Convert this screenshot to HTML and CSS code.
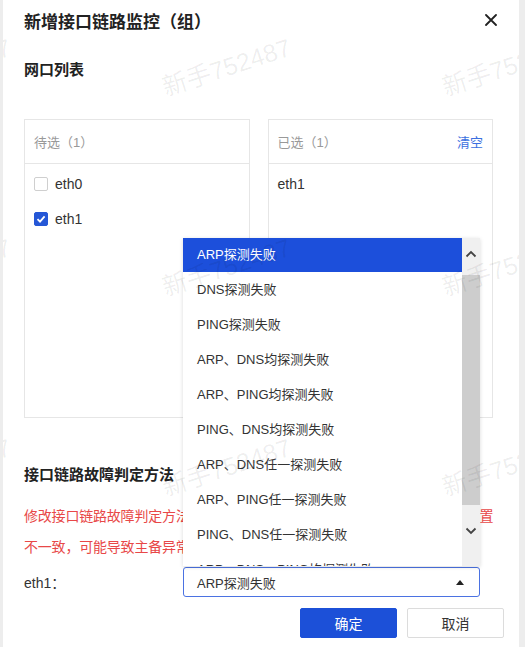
FILE: index.html
```html
<!DOCTYPE html>
<html lang="zh-CN">
  <head>
    <meta charset="UTF-8" />
    <meta name="viewport" content="width=device-width, initial-scale=1.0" />
    <title>新增接口链路监控（组）</title>
    <link rel="stylesheet" href="styles.css">
  </head>

  <body>
    <div class="dialog">
      <div class="dialog-header">
        <h2 class="dialog-title">新增接口链路监控（组）</h2>
        <button class="close-btn" aria-label="关闭">
          <svg width="12" height="12" viewBox="0 0 12 12">
            <path d="M1 1 L11 11 M11 1 L1 11" stroke="#222" stroke-width="1.8" stroke-linecap="round" />
          </svg>
        </button>
      </div>

      <h3 class="section-title">网口列表</h3>

      <div class="transfer">
        <div class="panel">
          <div class="panel-head">
            <span>待选（1）</span>
          </div>
          <ul class="panel-list">
            <li>
              <span class="checkbox"></span>
              eth0
            </li>
            <li>
              <span class="checkbox checked">
                <svg width="10" height="10" viewBox="0 0 10 10">
                  <path d="M1.5 5.2 L4 7.6 L8.6 2.4" fill="none" stroke="#fff" stroke-width="1.8" />
                </svg>
              </span>
              eth1
            </li>
          </ul>
        </div>
        <div class="panel">
          <div class="panel-head">
            <span>已选（1）</span>
            <a class="link">清空</a>
          </div>
          <ul class="panel-list">
            <li>eth1</li>
          </ul>
        </div>
      </div>

      <h3 class="section-title method-title">接口链路故障判定方法</h3>
      <p class="warning">
        <span>修改接口链路故障判定方法后，需确保主备设备接口的链路故障判定方法配置</span>
        <span>不一致，可能导致主备异常切换，请谨慎操作。</span>
      </p>

      <div class="form-row">
        <label class="form-label">eth1：</label>
        <div class="select">
          <span>ARP探测失败</span>
          <svg width="8" height="5" viewBox="0 0 8 5">
            <path d="M0 5 L4 0 L8 5 Z" fill="#222" />
          </svg>
        </div>
      </div>

      <div class="dialog-footer">
        <button class="btn btn-primary">确定</button>
        <button class="btn">取消</button>
      </div>

      <!-- open select list -->
      <div class="dropdown">
        <ul class="dropdown-list">
          <li class="active">ARP探测失败</li>
          <li>DNS探测失败</li>
          <li>PING探测失败</li>
          <li>ARP、DNS均探测失败</li>
          <li>ARP、PING均探测失败</li>
          <li>PING、DNS均探测失败</li>
          <li>ARP、DNS任一探测失败</li>
          <li>ARP、PING任一探测失败</li>
          <li>PING、DNS任一探测失败</li>
          <li>ARP、DNS、PING均探测失败</li>
        </ul>
        <div class="scrollbar">
          <div class="scroll-btn up">
            <svg width="12" height="8" viewBox="0 0 12 8">
              <path d="M1.5 6.5 L6 2 L10.5 6.5" fill="none" stroke="#444" stroke-width="1.8" />
            </svg>
          </div>
          <div class="scroll-thumb"></div>
          <div class="scroll-btn down">
            <svg width="12" height="8" viewBox="0 0 12 8">
              <path d="M1.5 1.5 L6 6 L10.5 1.5" fill="none" stroke="#444" stroke-width="1.8" />
            </svg>
          </div>
        </div>
      </div>

      <div class="watermark">
        <span style="left: -116px; top: 74px">新手752487</span>
        <span style="left: 164px; top: 74px">新手752487</span>
        <span style="left: 444px; top: 74px">新手752487</span>
        <span style="left: -116px; top: 274px">新手752487</span>
        <span style="left: 164px; top: 274px">新手752487</span>
        <span style="left: 444px; top: 274px">新手752487</span>
        <span style="left: -116px; top: 474px">新手752487</span>
        <span style="left: 164px; top: 474px">新手752487</span>
        <span style="left: 444px; top: 474px">新手752487</span>
      </div>
    </div>
  </body>
</html>
```

FILE: styles.css
```css
body {
  margin: 0;
  background-color: #ededed;
  font-family: "Liberation Sans", "Noto Sans CJK SC", sans-serif;
  font-size: 13px;
  color: #333;
}

ul {
  list-style: none;
  margin: 0;
  padding: 0;
}

.dialog {
  position: relative;
  box-sizing: border-box;
  width: 516px;
  height: 647px;
  margin-left: 3px;
  padding: 0 26px 0 21px;
  background-color: #fff;
  overflow: hidden;
}

.dialog-header {
  display: flex;
  align-items: center;
  justify-content: space-between;
  height: 40px;
}

.dialog-title {
  margin: 0;
  font-size: 17px;
  font-weight: 700;
  color: #222;
}

.close-btn {
  display: flex;
  border: none;
  background: none;
  padding: 0;
  margin-right: -4px;
  cursor: pointer;
}

.section-title {
  margin: 20px 0 0;
  font-size: 15px;
  line-height: 20px;
  font-weight: 700;
  color: #222;
}

.transfer {
  display: grid;
  grid-template-columns: 1fr 1fr;
  gap: 18px;
  margin-top: 39px;
}

.panel {
  height: 299px;
  box-sizing: border-box;
  border: 1px solid #e6e6e6;
}

.panel-head {
  display: flex;
  align-items: center;
  justify-content: space-between;
  height: 43px;
  padding: 0 9px;
  border-bottom: 1px solid #e6e6e6;
  color: #999;
}

.link {
  color: #3b6fe0;
  cursor: pointer;
}

.panel-list {
  padding: 2px 9px 0;
}

.panel-list li {
  display: flex;
  align-items: center;
  gap: 7px;
  height: 35px;
  font-size: 14px;
  color: #333;
}

.checkbox {
  display: flex;
  align-items: center;
  justify-content: center;
  width: 14px;
  height: 14px;
  box-sizing: border-box;
  border: 1px solid #cfcfcf;
  border-radius: 2px;
}

.checkbox.checked {
  border-color: #2557d6;
  background-color: #2557d6;
}

.method-title {
  margin-top: 46px;
  line-height: 22px;
}

.warning {
  margin: 15px 0 0;
  font-size: 14px;
  letter-spacing: -0.2px;
  line-height: 31px;
  color: #e84848;
}

.warning span {
  display: block;
  white-space: nowrap;
}

.form-row {
  display: flex;
  align-items: center;
  margin-top: 4px;
}

.form-label {
  width: 159px;
  font-size: 14px;
  color: #333;
}

.select {
  display: flex;
  align-items: center;
  justify-content: space-between;
  box-sizing: border-box;
  width: 297px;
  height: 30px;
  padding: 0 15px 0 13px;
  border: 1.5px solid #4b72e2;
  border-radius: 3px;
  color: #333;
}

.dialog-footer {
  display: flex;
  justify-content: flex-end;
  gap: 10px;
  margin: 11px -11px 0 0;
}

.btn {
  width: 97px;
  height: 30px;
  border: 1px solid #dcdcdc;
  border-radius: 2px;
  background-color: #fff;
  color: #333;
  font-family: inherit;
  font-size: 14px;
  cursor: pointer;
}

.btn-primary {
  border-color: #1c50d8;
  background-color: #1c50d8;
  color: #fff;
}

/* open select list */
.dropdown {
  position: absolute;
  left: 180px;
  top: 238px;
  display: flex;
  width: 297px;
  height: 328px;
  background-color: #fff;
  box-shadow: 0 1px 4px rgba(0, 0, 0, 0.15);
}

.dropdown-list {
  flex: 1;
  overflow: hidden;
}

.dropdown-list li {
  height: 35px;
  line-height: 35px;
  padding-left: 14px;
  color: #333;
  white-space: nowrap;
}

.dropdown-list li.active {
  height: 34px;
  line-height: 34px;
  background-color: #1c4fdb;
  color: #fff;
}

.scrollbar {
  display: flex;
  flex-direction: column;
  width: 18px;
  background-color: #f0f0f0;
}

.scroll-btn {
  display: flex;
  align-items: center;
  justify-content: center;
}

.scroll-btn.up {
  height: 37px;
  padding-top: 12px;
  box-sizing: border-box;
  align-items: flex-start;
}

.scroll-thumb {
  height: 230px;
  background-color: #cdcdcd;
}

.scroll-btn.down {
  flex: 1;
  padding-top: 22px;
  box-sizing: border-box;
  align-items: flex-start;
}

.watermark {
  position: absolute;
  inset: 0;
  overflow: hidden;
  pointer-events: none;
}

.watermark span {
  position: absolute;
  font-size: 25px;
  line-height: 26px;
  color: rgba(0, 0, 0, 0.07);
  white-space: nowrap;
  transform: rotate(-18deg);
  transform-origin: left bottom;
}
```
